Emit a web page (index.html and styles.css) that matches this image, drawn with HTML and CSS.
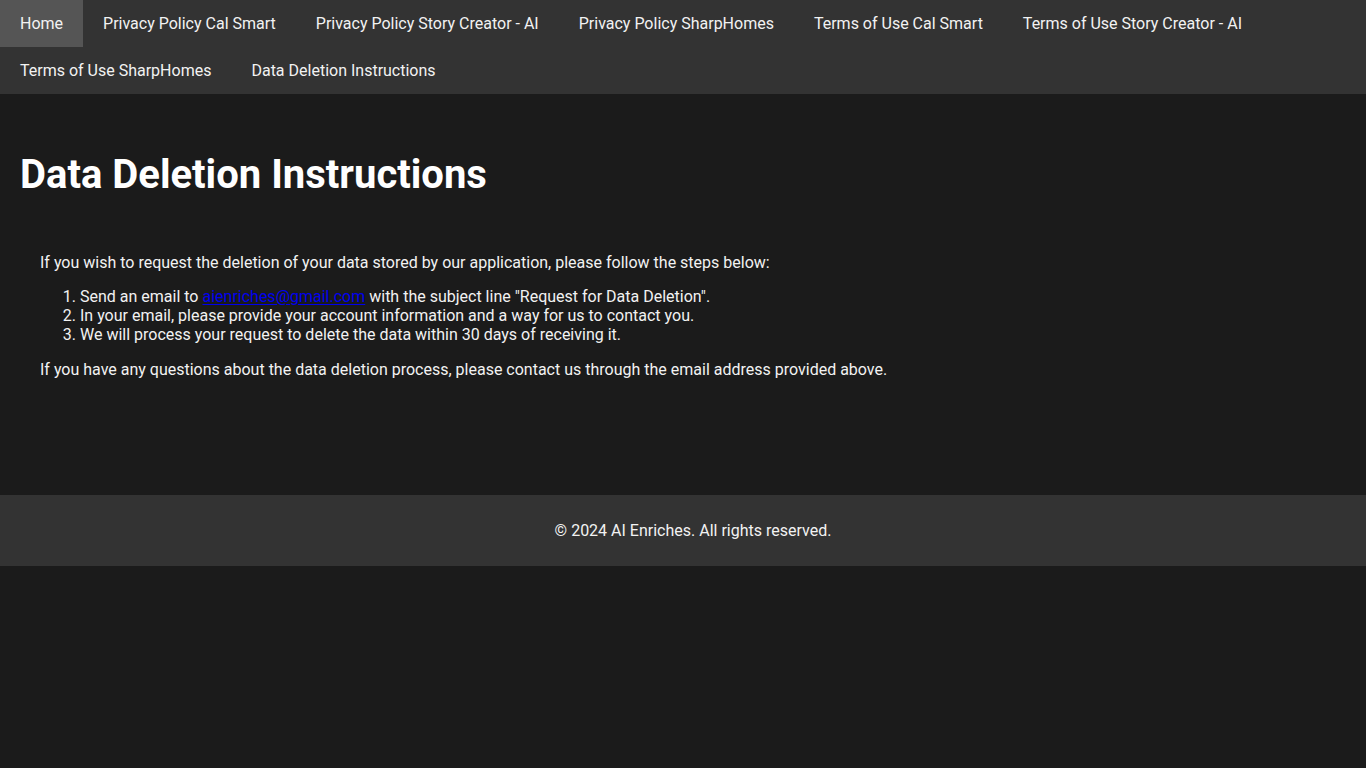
FILE: index.html
```html
<!DOCTYPE html>
<html lang="en">
<head>
<meta charset="utf-8">
<title>Data Deletion Instructions</title>
<link rel="stylesheet" href="styles.css">
</head>
<body>
<nav class="topnav">
  <a class="active" href="#">Home</a>
  <a href="#">Privacy Policy Cal Smart</a>
  <a href="#">Privacy Policy Story Creator - AI</a>
  <a href="#">Privacy Policy SharpHomes</a>
  <a href="#">Terms of Use Cal Smart</a>
  <a href="#">Terms of Use Story Creator - AI</a>
  <a href="#">Terms of Use SharpHomes</a>
  <a href="#">Data Deletion Instructions</a>
</nav>
<main class="main">
  <h1 class="title">Data Deletion Instructions</h1>
  <div class="content">
    <p>If you wish to request the deletion of your data stored by our application, please follow the steps below:</p>
    <ol>
      <li>Send an email to <a class="mail" href="#">aienriches@gmail.com</a> with the subject line "Request for Data Deletion".</li>
      <li>In your email, please provide your account information and a way for us to contact you.</li>
      <li>We will process your request to delete the data within 30 days of receiving it.</li>
    </ol>
    <p>If you have any questions about the data deletion process, please contact us through the email address provided above.</p>
  </div>
</main>
<footer class="footer">&copy; 2024 AI Enriches. All rights reserved.</footer>
</body>
</html>
```
FILE: styles.css
```css
html, body {
  margin: 0;
  padding: 0;
  background: #1b1b1b;
  color: #f2f2f2;
  font-family: Roboto, "Liberation Sans", sans-serif;
  font-size: 16px;
}
.topnav {
  display: flex;
  flex-wrap: wrap;
  background: #333333;
}
.topnav a {
  display: block;
  color: #f2f2f2;
  text-decoration: none;
  padding: 14px 20px 13.75px;
  line-height: 19px;
}
.topnav a.active {
  background: #555555;
}
.main {
  padding: 20px;
}
.title {
  font-size: 40px;
  font-weight: 700;
  line-height: 47px;
  margin: 37px 0 0;
  color: #ffffff;
}
.content {
  padding: 55px 20px 96px;
}
.content p {
  margin: 0;
  line-height: 19px;
}
.content ol {
  margin: 15px 0 16px;
  padding-left: 40px;
}
.content li {
  line-height: 19px;
}
.mail {
  color: #0000ee;
  text-decoration: underline;
  text-decoration-thickness: 1px;
  text-underline-offset: 2px;
}
.footer {
  background: #333333;
  text-align: center;
  padding: 26px 0 26px 20px;
  line-height: 19px;
}
```
